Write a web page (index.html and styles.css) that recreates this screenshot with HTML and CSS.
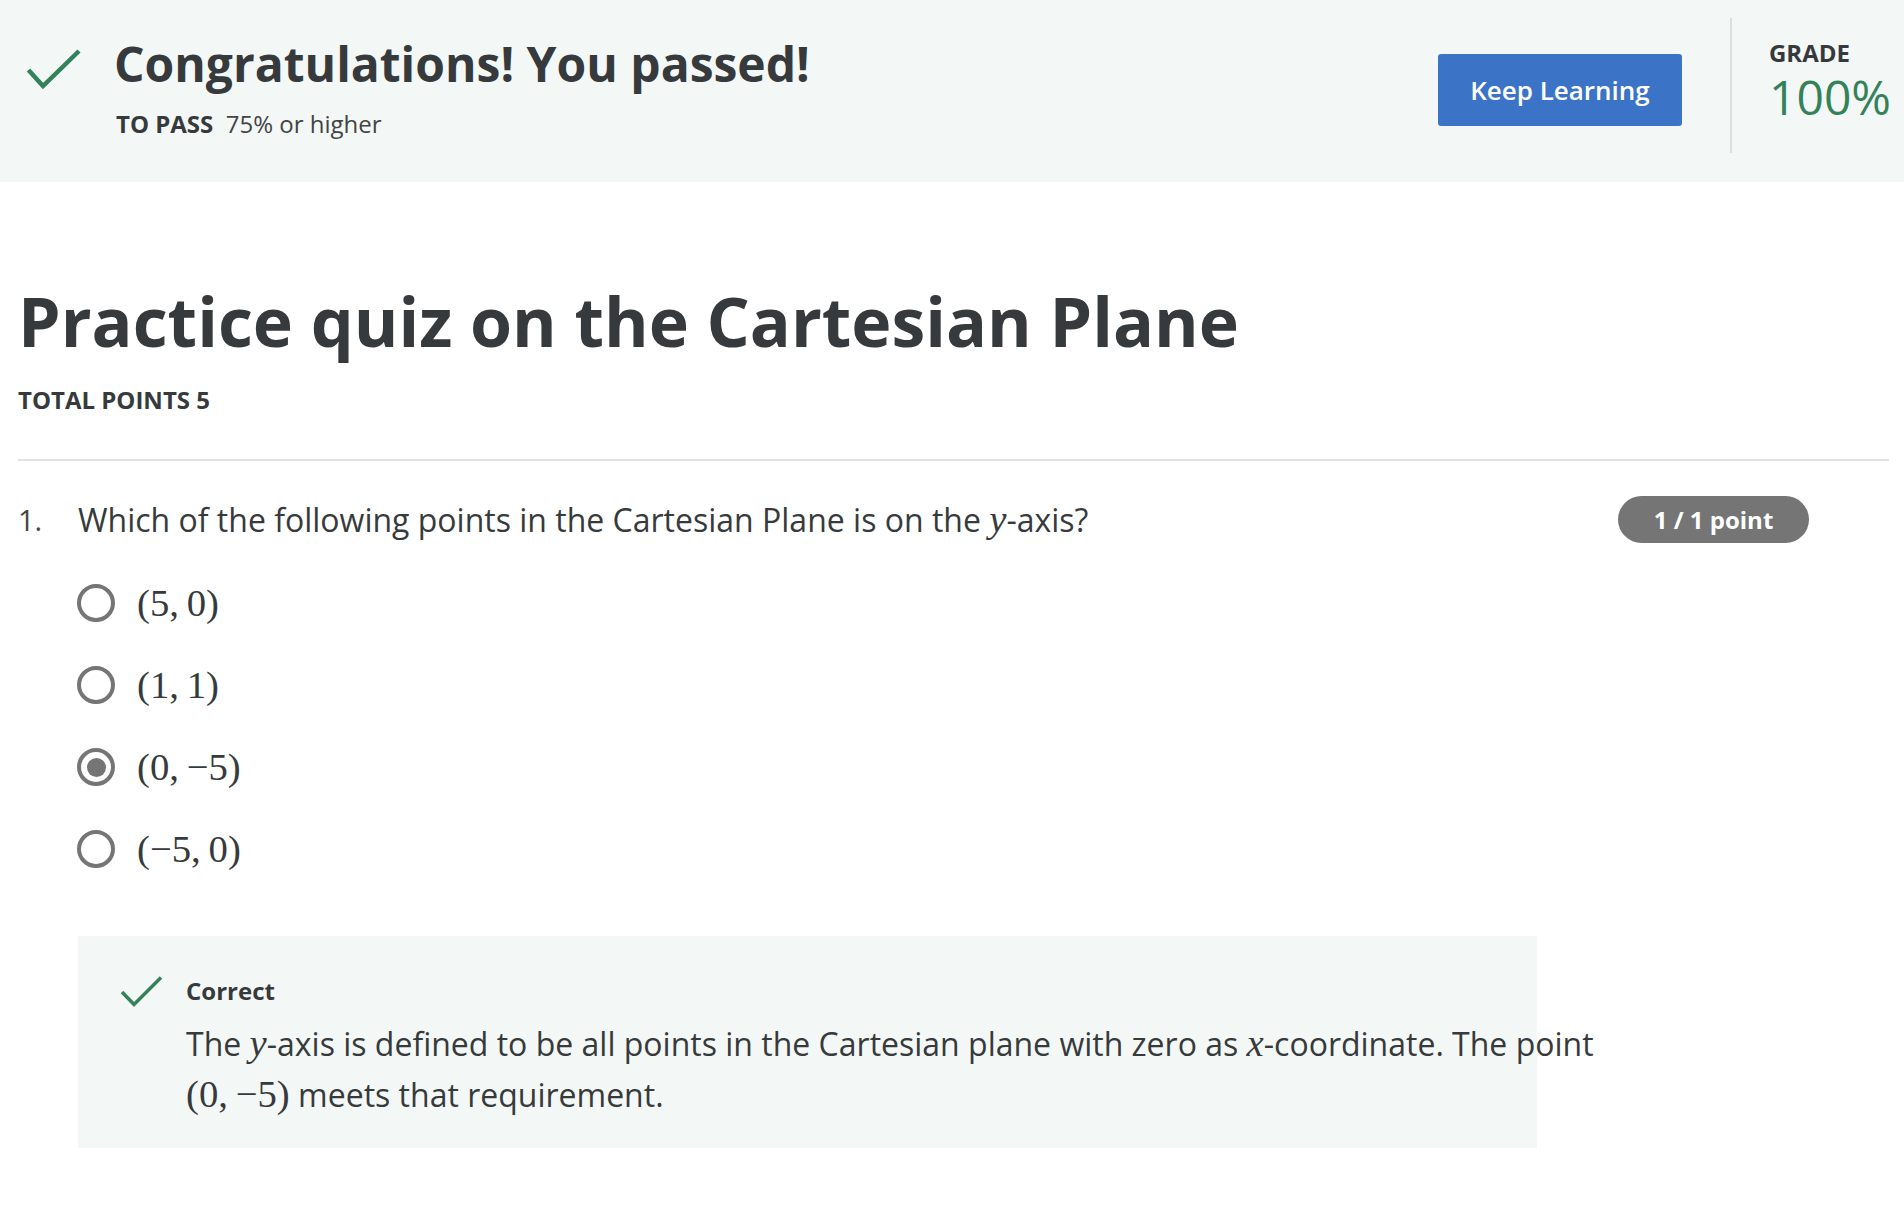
FILE: index.html
```html
<!DOCTYPE html>
<html lang="en">
<head>
<meta charset="utf-8">
<title>Practice quiz on the Cartesian Plane</title>
<link rel="stylesheet" href="styles.css">
</head>
<body>
<header class="banner">
  <div class="banner-main">
    <svg class="banner-check" width="54" height="44" viewBox="0 0 54 44" aria-hidden="true">
      <polyline points="1.5,22 16,38 52,3" fill="none" stroke="#34825a" stroke-width="4.5"/>
    </svg>
    <div class="banner-text">
      <h2 class="banner-title">Congratulations! You passed!</h2>
      <p class="banner-sub"><strong>TO PASS</strong>&nbsp; 75% or higher</p>
    </div>
  </div>
  <div class="banner-actions">
    <button class="btn-primary" type="button">Keep Learning</button>
    <div class="vdivider"></div>
    <div class="grade">
      <div class="grade-label">GRADE</div>
      <div class="grade-value">100%</div>
    </div>
  </div>
</header>

<main class="content">
  <h1 class="quiz-title">Practice quiz on the Cartesian Plane</h1>
  <div class="total-points">TOTAL POINTS 5</div>
  <hr class="rule">

  <section class="question">
    <div class="question-head">
      <span class="q-num">1.</span>
      <span class="q-text">Which of the following points in the Cartesian Plane is on the <span class="math mi">y</span>-axis?</span>
      <span class="badge">1 / 1 point</span>
    </div>

    <ul class="options">
      <li class="option"><span class="radio"></span><span class="math">(5,<span class="thin"></span>0)</span></li>
      <li class="option"><span class="radio"></span><span class="math">(1,<span class="thin"></span>1)</span></li>
      <li class="option"><span class="radio checked"></span><span class="math">(0,<span class="thin"></span>−5)</span></li>
      <li class="option"><span class="radio"></span><span class="math">(−5,<span class="thin"></span>0)</span></li>
    </ul>

    <div class="feedback">
      <svg class="feedback-check" width="46" height="34" viewBox="0 0 46 34" aria-hidden="true">
        <polyline points="4,17 16,29.5 43,2.5" fill="none" stroke="#34825a" stroke-width="3.5"/>
      </svg>
      <div class="feedback-body">
        <div class="feedback-title">Correct</div>
        <p class="feedback-text">The <span class="math mi">y</span>-axis is defined to be all points in the Cartesian plane with zero as <span class="math mi">x</span>-coordinate. The point <span class="math">(0,<span class="thin"></span>−5)</span> meets that requirement.</p>
      </div>
    </div>
  </section>
</main>
</body>
</html>
```

FILE: styles.css
```css
html, body {
  margin: 0;
  padding: 0;
  background: #ffffff;
}

body {
  font-family: "Open Sans", "Noto Sans", sans-serif;
  color: #373a3c;
}

/* ---------- banner ---------- */
.banner {
  display: flex;
  align-items: flex-start;
  justify-content: space-between;
  height: 182px;
  box-sizing: border-box;
  padding: 0 13px 0 27px;
  background: #f3f8f6;
}

.banner-main {
  display: flex;
  align-items: flex-start;
  margin-top: 36px;
}

.banner-check {
  display: block;
  margin-top: 12px;
  margin-right: 33px;
}

.banner-title {
  margin: 0;
  font-size: 48px;
  line-height: 56px;
  font-weight: 700;
  color: #373a3c;
}

.banner-sub {
  margin: 17px 0 0 2px;
  font-size: 24px;
  line-height: 30px;
  color: #444;
}

.banner-sub strong {
  font-weight: 700;
  color: #373a3c;
}

.banner-actions {
  display: flex;
  align-items: flex-start;
}

.btn-primary {
  margin-top: 54px;
  width: 244px;
  height: 72px;
  border: 0;
  border-radius: 3px;
  background: #3b74c7;
  color: #fff;
  font-family: "Open Sans", sans-serif;
  font-size: 26px;
  font-weight: 600;
  cursor: pointer;
}

.vdivider {
  width: 2px;
  height: 135px;
  margin: 18px 0 0 48px;
  background: #dcdfdd;
}

.grade {
  margin: 39px 0 0 37px;
}

.grade-label {
  font-size: 24px;
  line-height: 28px;
  font-weight: 700;
  color: #373a3c;
}

.grade-value {
  margin-top: 2px;
  font-size: 48px;
  line-height: 56px;
  font-weight: 400;
  color: #34825a;
}

/* ---------- content ---------- */
.content {
  padding: 0 15px 40px 18px;
}

.quiz-title {
  margin: 99px 0 0;
  font-size: 68px;
  line-height: 80px;
  font-weight: 700;
  color: #373a3c;
}

.total-points {
  margin-top: 24px;
  font-size: 24px;
  line-height: 30px;
  font-weight: 700;
  color: #373a3c;
}

.rule {
  margin: 44px 0 0;
  border: 0;
  border-top: 2px solid #e1e3e2;
}

.question-head {
  display: flex;
  align-items: center;
  margin-top: 35px;
}

.q-num {
  width: 60px;
  font-size: 29px;
  line-height: 44px;
  color: #444;
}

.q-text {
  flex: 1;
  font-size: 32px;
  line-height: 44px;
}

.badge {
  display: inline-flex;
  align-items: center;
  justify-content: center;
  width: 191px;
  height: 47px;
  margin-right: 80px;
  border-radius: 24px;
  background: #757575;
  color: #fff;
  font-size: 24px;
  font-weight: 700;
}

.math {
  font-family: "Liberation Serif", "Times New Roman", serif;
  font-size: 1.21em;
  line-height: 1;
}

.mi {
  font-style: italic;
}

.thin {
  display: inline-block;
  width: 0.2em;
}

.options {
  list-style: none;
  margin: 19px 0 0;
  padding: 0 0 0 59px;
}

.option {
  display: flex;
  align-items: center;
  height: 82px;
  font-size: 32px;
  color: #373a3c;
}

.radio {
  position: relative;
  width: 38px;
  height: 38px;
  box-sizing: border-box;
  border: 4px solid #757575;
  border-radius: 50%;
  margin-right: 22px;
  flex: none;
}

.radio.checked::after {
  content: "";
  position: absolute;
  left: 5.5px;
  top: 5.5px;
  width: 19px;
  height: 19px;
  border-radius: 50%;
  background: #757575;
}

.feedback {
  display: flex;
  align-items: flex-start;
  width: 1459px;
  box-sizing: border-box;
  margin: 46px 0 0 60px;
  padding: 39px 0 28px 40px;
  background: #f3f8f6;
}

.feedback-check {
  display: block;
  flex: none;
  margin-right: 22px;
}

.feedback-body {
  margin-top: 1px;
}

.feedback-title {
  font-size: 24px;
  line-height: 30px;
  font-weight: 700;
  color: #373a3c;
}

.feedback-text {
  width: 1440px;
  margin: 12px 0 0;
  font-size: 32px;
  line-height: 51px;
  color: #373a3c;
}
```
